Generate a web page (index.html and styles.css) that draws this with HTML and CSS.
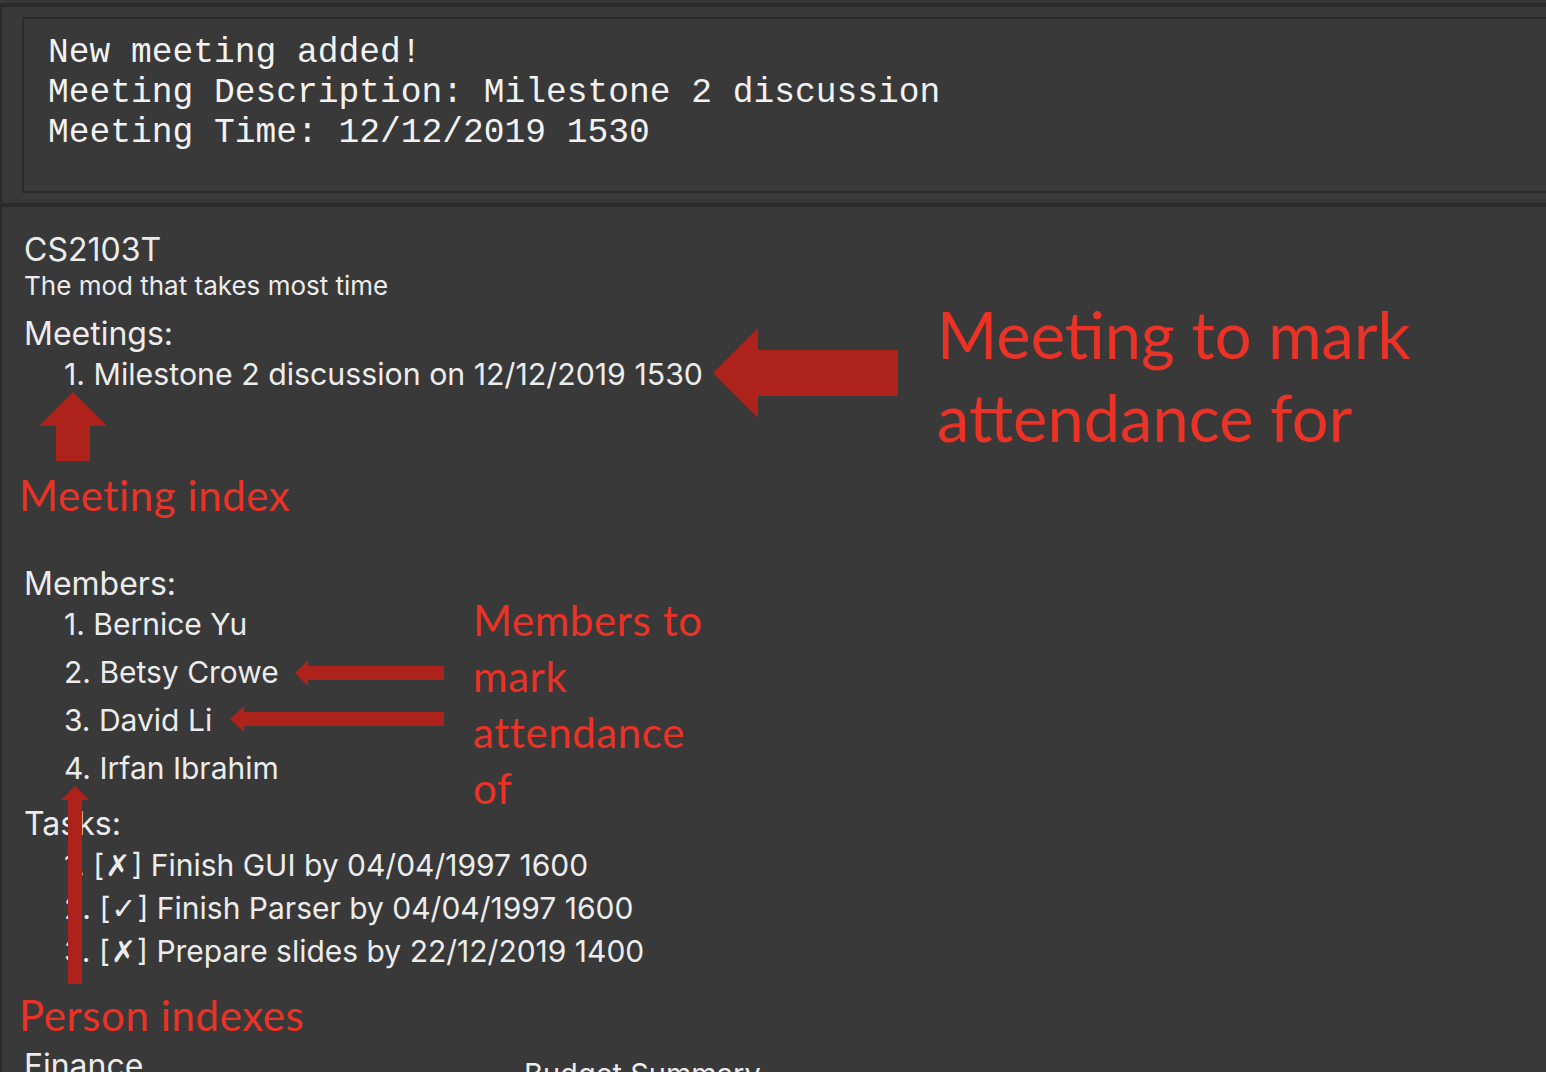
FILE: index.html
```html
<!DOCTYPE html>
<html>
<head>
<meta charset="utf-8">
<link rel="stylesheet" href="styles.css">
</head>
<body>
<div class="app">
  <div class="result-panel">
    <div class="result-box">
      <div class="mono-line">New meeting added!</div>
      <div class="mono-line">Meeting Description: Milestone 2 discussion</div>
      <div class="mono-line">Meeting Time: 12/12/2019 1530</div>
    </div>
  </div>
  <div class="detail-panel">
    <div class="project-title">CS2103T</div>
    <div class="project-desc">The mod that takes most time</div>

    <div class="section-heading">Meetings:</div>
    <div class="item-list meetings">
      <div class="item">1. Milestone 2 discussion on 12/12/2019 1530</div>
    </div>

    <div class="section-heading members-heading">Members:</div>
    <div class="item-list members">
      <div class="item">1. Bernice Yu</div>
      <div class="item">2. Betsy Crowe</div>
      <div class="item">3. David Li</div>
      <div class="item">4. Irfan Ibrahim</div>
    </div>

    <div class="section-heading tasks-heading">Tasks:</div>
    <div class="item-list tasks">
      <div class="item task">1. [<span class="cross">✗</span>] Finish GUI by 04/04/1997 1600</div>
      <div class="item task">2. [<span class="check">✓</span>] Finish Parser by 04/04/1997 1600</div>
      <div class="item task">3. [<span class="cross">✗</span>] Prepare slides by 22/12/2019 1400</div>
    </div>

    <div class="finance-row">
      <div class="section-heading finance">Finance</div>
      <div class="budget">Budget Summary</div>
    </div>
  </div>

  <svg class="arrows" width="1546" height="1072" viewBox="0 0 1546 1072">
    <polygon points="713,373 758,328 758,350 898,350 898,396 758,396 758,418"/>
    <polygon points="73,392 107,426 90,426 90,461 56,461 56,426 39,426"/>
    <polygon points="295,673 308,660 308,666 444,666 444,680 308,680 308,686"/>
    <polygon points="230,719 244,706 244,712 444,712 444,726 244,726 244,732"/>
    <polygon points="75,786 89,800 82,800 82,984 68,984 68,800 61,800"/>
  </svg>

  <div class="note note-meeting">Meeting to mark<br>attendance for</div>
  <div class="note note-index">Meeting index</div>
  <div class="note note-members">Members to<br>mark<br>attendance<br>of</div>
  <div class="note note-person">Person indexes</div>
</div>
</body>
</html>
```

FILE: styles.css
```css
html, body {
  margin: 0;
  padding: 0;
  background: #393939;
}

.app {
  position: relative;
  width: 1546px;
  height: 1072px;
  overflow: hidden;
  background: #393939;
  padding-top: 3px;
  box-sizing: border-box;
}

.result-panel {
  border-top: 4px solid #2b2b2b;
  border-left: 2px solid #2b2b2b;
  border-bottom: 4px solid #2b2b2b;
  padding: 10px 0 10px 20px;
}

.result-box {
  border: 2px solid #2b2b2b;
  border-right: none;
  padding: 14px 0 38px 24px;
}

.mono-line {
  font-family: "Liberation Mono", monospace;
  font-size: 34.6px;
  line-height: 40px;
  color: #f2f2f2;
  white-space: pre;
}

.detail-panel {
  border-left: 2px solid #2b2b2b;
  padding: 23px 0 0 22px;
  font-family: Inter, "Noto Sans", sans-serif;
  color: #ececec;
}

.project-title {
  font-size: 32px;
  line-height: 40px;
}

.project-desc {
  font-size: 26px;
  line-height: 32px;
}

.section-heading {
  font-size: 32px;
  line-height: 40px;
  margin-top: 12px;
}

.item-list {
  display: flex;
  flex-direction: column;
  padding-left: 40px;
}

.item {
  font-size: 30px;
  line-height: 40px;
  white-space: nowrap;
}

.meetings .item {
  font-size: 30.3px;
}

.members-heading {
  margin-top: 170px;
}

.members {
  gap: 8px;
}

.tasks-heading {
  margin-top: 16px;
}

.tasks .item {
  line-height: 42px;
}

.cross {
  font-family: "DejaVu Sans", sans-serif;
  font-weight: bold;
  padding: 0 1px;
}

.check {
  font-family: "DejaVu Sans", sans-serif;
  padding: 0 1px;
}

.finance-row {
  display: flex;
  align-items: flex-start;
  margin-top: 73px;
}

.finance {
  margin-top: 0;
  width: 500px;
}

.budget {
  font-size: 29px;
  line-height: 40px;
  margin-top: 8px;
}

.arrows {
  position: absolute;
  left: 0;
  top: 0;
  fill: #ad221a;
  pointer-events: none;
}

.note {
  position: absolute;
  font-family: Lato, "Open Sans", sans-serif;
  color: #ea3326;
  white-space: nowrap;
}

.note-meeting {
  left: 937px;
  top: 293px;
  font-size: 65px;
  line-height: 83px;
}

.note-index {
  left: 19px;
  top: 470px;
  font-size: 42px;
  line-height: 50px;
  letter-spacing: 0.6px;
}

.note-members {
  left: 473px;
  top: 592px;
  font-size: 42px;
  line-height: 56px;
  letter-spacing: 0.6px;
}

.note-person {
  left: 19px;
  top: 990px;
  font-size: 42px;
  line-height: 50px;
  letter-spacing: 0.6px;
}
```
